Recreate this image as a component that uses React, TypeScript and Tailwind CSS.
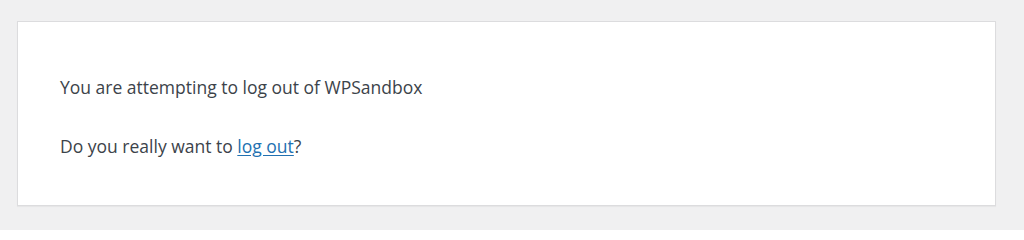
export default function App() {
  return (
    <div className="min-h-[230px] bg-[#f0f0f1] pl-[17px] pr-[28px] pt-[21px] font-['Open_Sans',sans-serif] text-[#3c434a]">
      <div className="border border-[#dcdcde] bg-white px-[42px] pt-[52px] pb-[45px] shadow-[0_1px_1px_rgba(0,0,0,0.04)]">
        <p className="text-[17.5px] leading-[27px]">You are attempting to log out of WPSandbox</p>
        <p className="mt-[32px] text-[17.5px] leading-[27px]">
          Do you really want to{" "}
          <a href="#" className="text-[#2271b1] underline underline-offset-2">
            log out
          </a>
          ?
        </p>
      </div>
    </div>
  );
}
